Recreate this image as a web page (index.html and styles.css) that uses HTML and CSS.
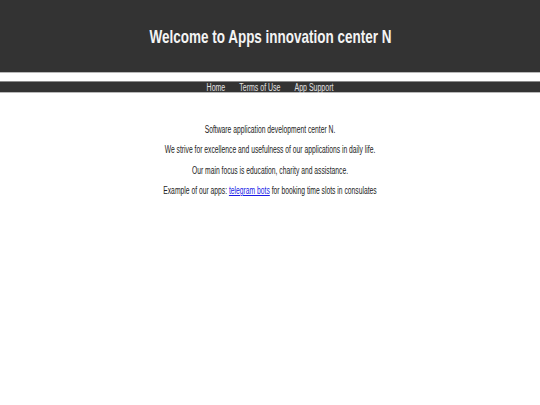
FILE: index.html
```html
<!DOCTYPE html>
<html lang="en">
<head>
<meta charset="utf-8">
<title>Apps innovation center N</title>
<link rel="stylesheet" href="styles.css">
</head>
<body>
<header class="masthead">
  <h1 class="title">Welcome to Apps innovation center N</h1>
</header>
<nav class="menu">
  <ul class="menu-list">
    <li><a class="menu-link" href="#">Home</a></li>
    <li><a class="menu-link" href="#">Terms of Use</a></li>
    <li><a class="menu-link" href="#">App Support</a></li>
  </ul>
</nav>
<main class="content">
  <p class="line">Software application development center N.</p>
  <p class="line">We strive for excellence and usefulness of our applications in daily life.</p>
  <p class="line">Our main focus is education, charity and assistance.</p>
  <p class="line">Example of our apps: <a class="link" href="#">telegram bots</a> for booking time slots in consulates</p>
</main>
</body>
</html>
```
FILE: styles.css
```css
html, body {
  margin: 0;
  padding: 0;
  background: #fff;
}
body {
  font-family: "Liberation Sans", Arial, sans-serif;
  color: #222;
}
.masthead {
  background: #333;
  height: 73px;
  box-sizing: border-box;
  padding-top: 2px;
  border-bottom: 1px solid #b8b8b8;
  display: flex;
  align-items: center;
  justify-content: center;
}
.title {
  margin: 0;
  font-size: 19px;
  font-weight: bold;
  color: #f4f4f4;
  line-height: 22px;
  transform: scaleX(0.71);
  white-space: nowrap;
}
.menu {
  margin-top: 8px;
  background: #333;
  border-top: 1px solid #8a8a8a;
  border-bottom: 1px solid #b8b8b8;
  height: 10px;
}
.menu-list {
  list-style: none;
  margin: 0;
  padding: 0;
  display: flex;
  justify-content: center;
  gap: 20px;
  transform: scaleX(0.7);
  font-size: 10px;
  line-height: 11px;
}
.menu-link {
  color: #e2e2e2;
  text-decoration: none;
}
.content {
  padding-top: 27px;
  transform: scaleX(0.675);
  text-align: center;
  font-size: 10px;
}
.line {
  margin: 0;
  line-height: 20.4px;
  white-space: nowrap;
}
.link {
  color: #1a1ae6;
  text-decoration: underline;
}
```
